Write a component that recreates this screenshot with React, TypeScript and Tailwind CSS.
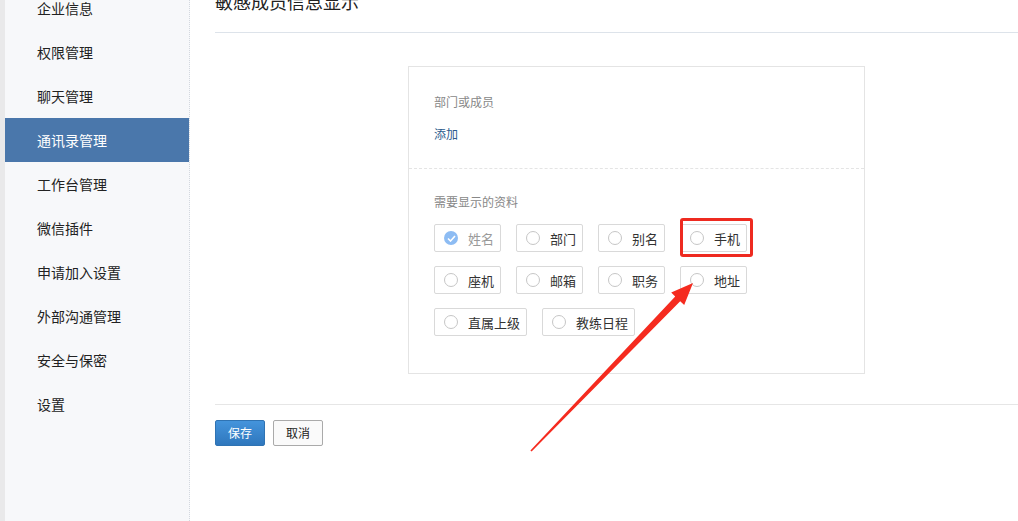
import React from 'react';

const menu = ['企业信息', '权限管理', '聊天管理', '通讯录管理', '工作台管理', '微信插件', '申请加入设置', '外部沟通管理', '安全与保密', '设置'];

const rows: { label: string; w: string; checked?: boolean }[][] = [
  [
    { label: '姓名', w: 'w-[67px]', checked: true },
    { label: '部门', w: 'w-[67px]' },
    { label: '别名', w: 'w-[67px]' },
    { label: '手机', w: 'w-[67px]' },
  ],
  [
    { label: '座机', w: 'w-[67px]' },
    { label: '邮箱', w: 'w-[67px]' },
    { label: '职务', w: 'w-[67px]' },
    { label: '地址', w: 'w-[67px]' },
  ],
  [
    { label: '直属上级', w: 'w-[93px]' },
    { label: '教练日程', w: 'w-[93px]' },
  ],
];

function Option({ label, w, checked }: { label: string; w: string; checked?: boolean }) {
  return (
    <div className={`${w} h-[28px] flex items-center pl-[9px] border border-[#d9d9d9] rounded-[2px] bg-white`}>
      {checked ? (
        <span className="w-[14px] h-[14px] rounded-full bg-[#8dbcf3] flex items-center justify-center">
          <svg width="9" height="7" viewBox="0 0 9 7" fill="none">
            <path d="M1 3.5 L3.5 6 L8 1" stroke="white" strokeWidth="1.6" />
          </svg>
        </span>
      ) : (
        <span className="w-[14px] h-[14px] rounded-full border border-[#c6c6c6] bg-white" />
      )}
      <span className={`ml-[10px] text-[13px] leading-none ${checked ? 'text-[#9a9a9a]' : 'text-[#333]'}`}>{label}</span>
    </div>
  );
}

export default function App() {
  return (
    <div
      className="relative w-[1018px] h-[521px] overflow-hidden flex bg-white"
      style={{ fontFamily: '"Noto Sans CJK SC", "Noto Sans", sans-serif' }}
    >
      <div className="w-[5px] bg-[#e9e9ea]" />
      <div className="w-[185px] bg-[#f7f8fa] border-r border-dotted border-[#d3d8df]">
        <ul className="-mt-[14px]">
          {menu.map((m) => (
            <li
              key={m}
              className={`h-[44px] flex items-center pl-[32px] text-[14px] leading-[20px] pb-[1px] ${
                m === '通讯录管理' ? 'bg-[#4a77ab] text-white' : 'text-[#222]'
              }`}
            >
              {m}
            </li>
          ))}
        </ul>
      </div>

      <div className="flex-1 pl-[25px]">
        <div className="-mt-[11px] h-[44px] border-b border-[#dde3ea] text-[18px] leading-[24px] text-[#222]">
          敏感成员信息显示
        </div>

        <div className="mt-[33px] ml-[193px] w-[457px] border border-[#e4e4e4]">
          <div className="px-[25px] pt-[27px] pb-[26px] border-b border-dashed border-[#e4e4e4]">
            <div className="text-[12px] leading-[16px] text-[#888]">部门或成员</div>
            <div className="mt-[16px] text-[12px] leading-[16px] text-[#2b5a8c]">添加</div>
          </div>
          <div className="px-[25px] pt-[25px] pb-[37px]">
            <div className="text-[12px] leading-[16px] text-[#888]">需要显示的资料</div>
            <div className="mt-[14px] flex flex-col gap-[14px]">
              {rows.map((r, i) => (
                <div key={i} className="flex gap-[15px]">
                  {r.map((o) => (
                    <Option key={o.label} {...o} />
                  ))}
                </div>
              ))}
            </div>
          </div>
        </div>

        <div className="mt-[30px] border-t border-[#e6e6e6] pt-[15px] flex gap-[8px]">
          <button className="w-[50px] h-[26px] rounded-[2px] border border-[#2f73b3] bg-gradient-to-b from-[#4494dc] to-[#2f77bd] text-white text-[12px]">
            保存
          </button>
          <button className="w-[50px] h-[26px] rounded-[2px] border border-[#aaa] bg-[#fafafa] text-[#222] text-[12px]">
            取消
          </button>
        </div>
      </div>

      <div className="absolute left-[680px] top-[218px] w-[73px] h-[39px] border-[3px] border-[#ee2a20] rounded-[3px]" />

      <svg className="absolute left-0 top-0 pointer-events-none" width="1018" height="521">
        <polygon
          points="693,283 684.2,305.1 680.2,301.2 531.6,451.6 530.4,450.4 675.2,296.4 671.2,292.5"
          fill="#f52b1f"
        />
      </svg>
    </div>
  );
}
